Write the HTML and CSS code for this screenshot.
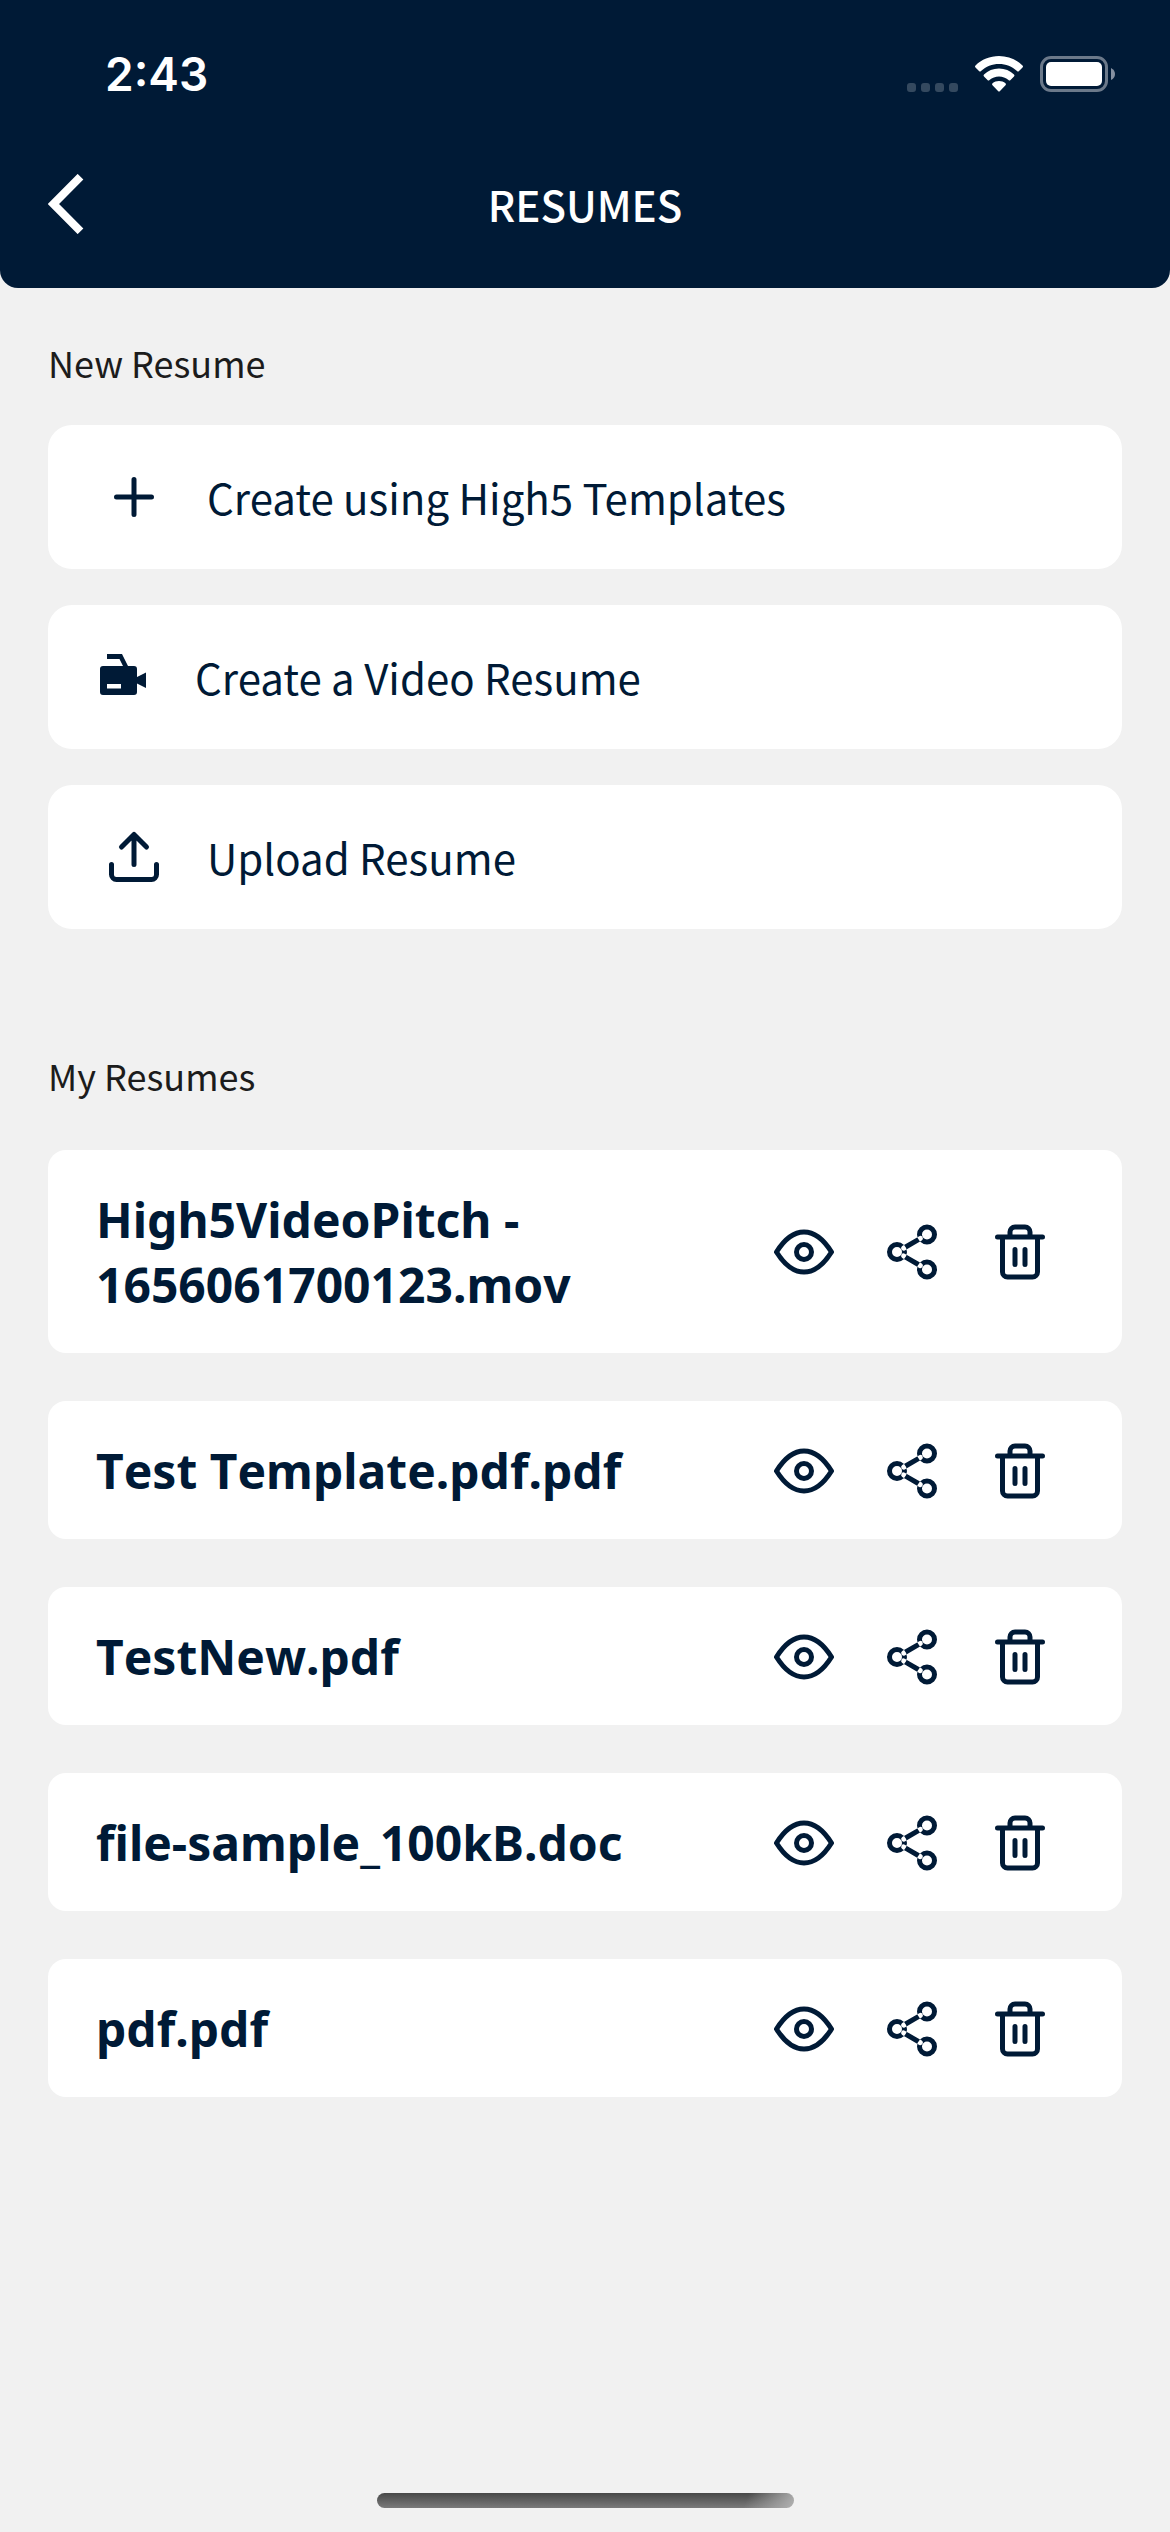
FILE: index.html
```html
<!DOCTYPE html>
<html lang="en">
<head>
<meta charset="utf-8">
<meta name="viewport" content="width=device-width, initial-scale=1">
<title>Resumes</title>
<link rel="stylesheet" href="styles.css">
</head>
<body>
<svg class="sprite" aria-hidden="true">
  <symbol id="eye" viewBox="0 0 24 24"><path class="line" d="M1 12C3.500 8 7 4 12 4s8.500 4 11 8c-2.500 4-6 8-11 8S3.500 16 1 12Z"/><circle class="line" cx="12" cy="12" r="3"/></symbol>
  <symbol id="share" viewBox="0 0 24 24"><path fill="currentColor" fill-rule="evenodd" d="M22 5a4 4 0 1 1-8 0a4 4 0 1 1 8 0ZM20 5a2 2 0 1 1-4 0a2 2 0 1 1 4 0ZM10 12a4 4 0 1 1-8 0a4 4 0 1 1 8 0ZM8 12a2 2 0 1 1-4 0a2 2 0 1 1 4 0ZM22 19a4 4 0 1 1-8 0a4 4 0 1 1 8 0ZM20 19a2 2 0 1 1-4 0a2 2 0 1 1 4 0ZM8.090 14.370A1 1 0 0 1 9.090 12.650L15.910 16.630A1 1 0 0 1 14.910 18.350ZM8.090 9.630A1 1 0 0 0 9.090 11.350L15.910 7.370A1 1 0 0 0 14.910 5.650Z"/></symbol>
  <symbol id="trash" viewBox="0 0 24 24"><path class="line" d="M3 6h18M5 6v14a2 2 0 0 0 2 2h10a2 2 0 0 0 2-2V6M8 6V4a2 2 0 0 1 2-2h4a2 2 0 0 1 2 2v2M10 11v6M14 11v6"/></symbol>
</svg>

<header class="header">
  <div class="status">
    <time>2:43</time>
    <div class="indicators">
      <svg width="51" height="36" viewBox="0 0 51 36" fill="#34495f"><rect y="27" width="9" height="9" rx="3"/><rect x="14" y="27" width="9" height="9" rx="3"/><rect x="28" y="27" width="9" height="9" rx="3"/><rect x="42" y="27" width="9" height="9" rx="3"/></svg>
      <svg width="48" height="36" viewBox="0 0 48 36" fill="#fff"><path d="M24 0C33 0 41.500 3.500 47.500 9.500Q48.500 10.500 47.500 11.500L44 15Q43 16 42 15C37 10.500 31 8 24 8S11 10.500 6 15Q5 16 4 15L.5 11.500Q-.5 10.500 .5 9.500C6.500 3.500 15 0 24 0Z"/><path d="M24 12.500C30 12.500 35 14.800 39 18.500Q40 19.500 39 20.500L35.500 24Q34.500 25 33.500 24C30.800 21.700 27.500 20.500 24 20.500S17.200 21.700 14.500 24Q13.500 25 12.500 24L9 20.500Q8 19.500 9 18.500C13 14.800 18 12.500 24 12.500Z"/><path d="M24 25C26.500 25 28.700 25.800 30.500 27.200Q31.500 28.200 30.500 29.200L25 35Q24 36 23 35L17.500 29.200Q16.500 28.200 17.500 27.200C19.300 25.800 21.500 25 24 25Z"/></svg>
      <svg width="75" height="36" viewBox="0 0 75 36"><rect x="1.500" y="1.500" width="65" height="33" rx="9.500" fill="none" stroke="#6b798a" stroke-width="3"/><rect x="6" y="6" width="56" height="24" rx="5" fill="#fff"/><path d="M71 12q4 2 4 6t-4 6Z" fill="#8590a0"/></svg>
    </div>
  </div>
  <div class="navbar">
    <button class="back" type="button" aria-label="Back"><svg width="36" height="60" viewBox="0 0 36 60"><path d="M32.500 2.700L5.500 30L32.500 57.300" fill="none" stroke="currentColor" stroke-width="8"/></svg></button>
    <h1>RESUMES</h1>
  </div>
</header>

<main class="content">
  <section class="create">
    <h2>New Resume</h2>
    <button class="option" type="button"><svg class="icon" viewBox="0 0 24 24"><path class="line" d="M5 12h14M12 5v14"/></svg>Create using High5 Templates</button>
    <button class="option option-video" type="button"><svg class="icon" viewBox="0 0 60 60" fill="currentColor"><path d="M15 7H30L36 19H42Q45 19 45 22V30L54 25.500V41L45 36.500V45Q45 48 42 48H11Q8 48 8 45V22Q8 19 11 19H31L27.500 12H15ZM15 37V41.500H29V37Z" fill-rule="evenodd"/></svg>Create a Video Resume</button>
    <button class="option" type="button"><svg class="icon" viewBox="0 0 24 24"><path class="line" d="M12 15V3M7 8l5-5 5 5M3 15v4a2 2 0 0 0 2 2h14a2 2 0 0 0 2-2v-4"/></svg>Upload Resume</button>
  </section>

  <section class="resumes">
    <h2>My Resumes</h2>
    <ul class="files">
      <li class="file"><span class="name">High5VideoPitch - 1656061700123.mov</span>
        <div class="actions"><button type="button" aria-label="View"><svg class="icon"><use href="#eye"/></svg></button><button type="button" aria-label="Share"><svg class="icon"><use href="#share"/></svg></button><button type="button" aria-label="Delete"><svg class="icon"><use href="#trash"/></svg></button></div></li>
      <li class="file"><span class="name">Test Template.pdf.pdf</span>
        <div class="actions"><button type="button" aria-label="View"><svg class="icon"><use href="#eye"/></svg></button><button type="button" aria-label="Share"><svg class="icon"><use href="#share"/></svg></button><button type="button" aria-label="Delete"><svg class="icon"><use href="#trash"/></svg></button></div></li>
      <li class="file"><span class="name">TestNew.pdf</span>
        <div class="actions"><button type="button" aria-label="View"><svg class="icon"><use href="#eye"/></svg></button><button type="button" aria-label="Share"><svg class="icon"><use href="#share"/></svg></button><button type="button" aria-label="Delete"><svg class="icon"><use href="#trash"/></svg></button></div></li>
      <li class="file"><span class="name">file-sample_100kB.doc</span>
        <div class="actions"><button type="button" aria-label="View"><svg class="icon"><use href="#eye"/></svg></button><button type="button" aria-label="Share"><svg class="icon"><use href="#share"/></svg></button><button type="button" aria-label="Delete"><svg class="icon"><use href="#trash"/></svg></button></div></li>
      <li class="file"><span class="name">pdf.pdf</span>
        <div class="actions"><button type="button" aria-label="View"><svg class="icon"><use href="#eye"/></svg></button><button type="button" aria-label="Share"><svg class="icon"><use href="#share"/></svg></button><button type="button" aria-label="Delete"><svg class="icon"><use href="#trash"/></svg></button></div></li>
    </ul>
  </section>
</main>
<div class="home-bar"></div>
</body>
</html>
```
FILE: styles.css
```css
* {
  box-sizing: border-box;
}

body {
  margin: 0;
  min-height: 100vh;
  display: flex;
  flex-direction: column;
  background: #f1f1f1;
  color: #001a36;
  font-family: "Noto Sans CJK JP", "Noto Sans", sans-serif;
}

button {
  margin: 0;
  padding: 0;
  border: 0;
  background: none;
  color: inherit;
  font: inherit;
  text-align: left;
}

svg {
  display: block;
  flex: none;
}

.sprite {
  position: absolute;
  width: 0;
  height: 0;
}

.line {
  fill: none;
  stroke: currentColor;
  stroke-width: 2;
  stroke-linecap: round;
  stroke-linejoin: round;
}

.icon {
  width: 60px;
  height: 60px;
}

.header {
  background: #001a36;
  color: #fff;
  border-radius: 0 0 18px 18px;
}

.status {
  display: flex;
  align-items: center;
  justify-content: space-between;
  height: 148px;
  padding: 0 55px 0 105px;
  font: 600 46px/60px Inter, sans-serif;
}

.indicators {
  display: flex;
  gap: 17px;
}

.navbar {
  display: grid;
  grid-template-columns: 1fr auto 1fr;
  align-items: center;
  padding: 26px 48px 54px;
}

h1,
h2 {
  margin: 0;
}

h1 {
  font-size: 42px;
  line-height: 60px;
  font-weight: 500;
}

h2 {
  font-size: 36px;
  line-height: 53px;
  font-weight: 400;
  color: #1c1c1c;
}

.content {
  padding: 48px;
}

.create {
  display: flex;
  flex-direction: column;
  gap: 36px;
}

.option {
  display: flex;
  align-items: center;
  gap: 43px;
  padding: 42px 56px;
  background: #fff;
  border-radius: 24px;
  font-size: 42px;
  line-height: 60px;
}

.option-video {
  padding-left: 44px;
}

.resumes {
  margin-top: 120px;
}

.files {
  display: flex;
  flex-direction: column;
  gap: 48px;
  margin: 48px 0 0;
  padding: 0;
  list-style: none;
}

.file {
  display: flex;
  align-items: center;
  padding: 37px 72px 36px 48px;
  background: #fff;
  border-radius: 18px;
}

.name {
  flex: 1;
  font: 700 48px/65px "Noto Sans", sans-serif;
  font-kerning: none;
}

.actions {
  display: flex;
  gap: 48px;
}

.home-bar {
  width: 36%;
  max-width: 417px;
  height: 15px;
  margin: auto auto 24px;
  border-radius: 8px;
  background:
    linear-gradient(110deg, transparent 88%, #b0b0b0 100%),
    linear-gradient(#484848, #7a7a7a);
}
```
